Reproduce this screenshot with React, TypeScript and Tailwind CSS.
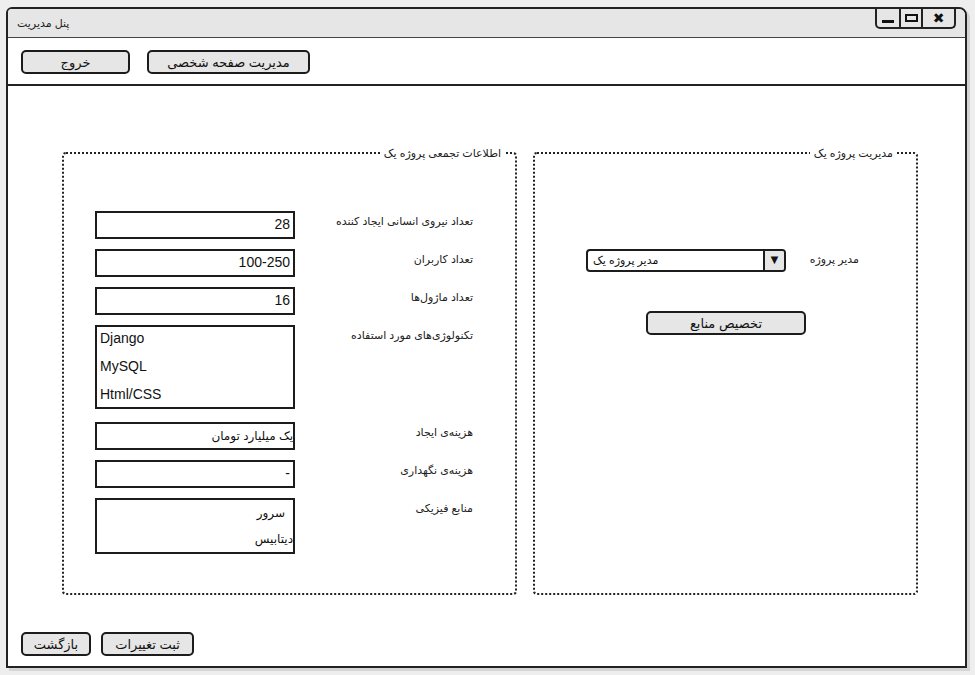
const font = "font-['Liberation_Sans','DejaVu_Sans',sans-serif]"

function Btn({ label, className }: { label: string; className: string }) {
  return (
    <button
      className={`h-[24px] rounded-[5px] border-2 border-[#1c1c1c] bg-[#e6e6e6] text-[13px] font-normal text-[#111] leading-none ${className}`}
    >
      {label}
    </button>
  )
}

function Field({ value, latin }: { value: string; latin?: boolean }) {
  return (
    <div
      dir="rtl"
      className={`flex h-[28px] w-[200px] items-center border-2 border-[#1c1c1c] bg-white px-[3px] text-[#111] ${latin ? "text-[14px]" : "text-[12px] pr-0"}`}
    >
      {value}
    </div>
  )
}

function Row({ label, children, className }: { label: string; children: React.ReactNode; className?: string }) {
  return (
    <div className={`flex items-start justify-between ${className ?? ""}`}>
      {children}
      <span dir="rtl" className="pt-[2px] text-[11px] text-[#222]">
        {label}
      </span>
    </div>
  )
}

export default function App() {
  return (
    <div className={`h-[675px] w-[975px] bg-[#eeeeee] pl-[6px] pt-[7px] ${font}`}>
      <div className="flex h-[661px] w-[961px] flex-col overflow-hidden rounded-tl-[6px] rounded-tr-[8px] border-2 border-[#222] bg-white shadow-[3px_3px_0_#d4d4d4]">
        {/* title bar */}
        <div className="flex h-[29px] items-start justify-between border-b border-[#444] bg-[#e6e6e6]">
          <span dir="rtl" className="pl-[9px] pt-[6px] text-[11px] text-[#222]">
            پنل مدیریت
          </span>
          <div className="mr-[9px] flex h-[20px] items-stretch rounded-b-[5px] border-2 border-t-0 border-[#222] bg-[#e6e6e6]">
            <div className="flex w-[22px] items-end justify-center pb-[4px]">
              <div className="h-[3px] w-[12px] bg-[#111]" />
            </div>
            <div className="flex w-[22px] items-center justify-center border-l-2 border-[#222]">
              <div className="h-[8px] w-[13px] border-2 border-[#111]" />
            </div>
            <div className="flex w-[33px] items-center justify-center border-l-2 border-[#222] text-[14px] font-bold text-[#111]">
              ✖
            </div>
          </div>
        </div>

        {/* toolbar */}
        <div className="flex h-[48px] items-start gap-[17px] border-b-2 border-[#222] pl-[13px] pt-[12px]">
          <Btn label="خروج" className="w-[109px]" />
          <Btn label="مدیریت صفحه شخصی" className="w-[163px]" />
        </div>

        {/* content */}
        <div className="flex flex-1 flex-col">
          <div className="flex gap-[16px] pl-[54px] pt-[59px]">
            <fieldset
              dir="rtl"
              className="h-[450px] w-[455px] rounded-[4px] border-2 border-dotted border-[#222] pl-[31px] pr-[42px]"
            >
              <legend className="mr-[-32px] px-[4px] text-[11px] text-[#222]">اطلاعات تجمعی پروژه یک</legend>
              <div dir="ltr" className="flex flex-col pt-[49px]">
                <Row label="تعداد نیروی انسانی ایجاد کننده">
                  <Field value="28" latin />
                </Row>
                <Row label="تعداد کاربران" className="mt-[10px]">
                  <Field value="100-250" latin />
                </Row>
                <Row label="تعداد ماژول‌ها" className="mt-[10px]">
                  <Field value="16" latin />
                </Row>
                <Row label="تکنولوژی‌های مورد استفاده" className="mt-[10px]">
                  <div className="flex h-[84px] w-[200px] flex-col justify-center gap-[9px] border-2 border-[#1c1c1c] pl-[3px] text-[14px] leading-[19px] text-[#111]">
                    <span>Django</span>
                    <span>MySQL</span>
                    <span>Html/CSS</span>
                  </div>
                </Row>
                <Row label="هزینه‌ی ایجاد" className="mt-[13px]">
                  <Field value="یک میلیارد تومان" />
                </Row>
                <Row label="هزینه‌ی نگهداری" className="mt-[10px]">
                  <Field value="-" latin />
                </Row>
                <Row label="منابع فیزیکی" className="mt-[10px]">
                  <div
                    dir="rtl"
                    className="flex h-[56px] w-[200px] flex-col justify-center gap-[10px] border-2 border-[#1c1c1c] text-[12px] leading-[16px] text-[#111]"
                  >
                    <span className="pr-[8px]">سرور</span>
                    <span className="pr-0">دیتابیس</span>
                  </div>
                </Row>
              </div>
            </fieldset>

            <fieldset
              dir="rtl"
              className="h-[450px] w-[385px] rounded-[4px] border-2 border-dotted border-[#222] pl-[51px] pr-[57px]"
            >
              <legend className="mr-[-38px] px-[4px] text-[11px] text-[#222]">مدیریت پروژه یک</legend>
              <div dir="ltr" className="flex flex-col pt-[87px]">
                <Row label="مدیر پروژه">
                  <div className="flex h-[23px] w-[200px] overflow-hidden rounded-[4px] border-2 border-[#1c1c1c] bg-white">
                    <span dir="rtl" className="flex flex-1 items-center justify-end pr-[4px] text-left text-[11px] text-[#111]">
                      <span className="mr-auto pl-[5px]">مدیر پروژه یک</span>
                    </span>
                    <span className="flex w-[21px] items-center justify-center border-l-2 border-[#1c1c1c] bg-[#e6e6e6] text-[13px] text-[#111]">
                      ▼
                    </span>
                  </div>
                </Row>
                <div className="mt-[39px] pl-[60px]">
                  <Btn label="تخصیص منابع" className="w-[160px]" />
                </div>
              </div>
            </fieldset>
          </div>

          <div className="mt-auto flex gap-[10px] pb-[10px] pl-[13px]">
            <Btn label="بازگشت" className="w-[70px]" />
            <Btn label="ثبت تغییرات" className="w-[93px]" />
          </div>
        </div>
      </div>
    </div>
  )
}
